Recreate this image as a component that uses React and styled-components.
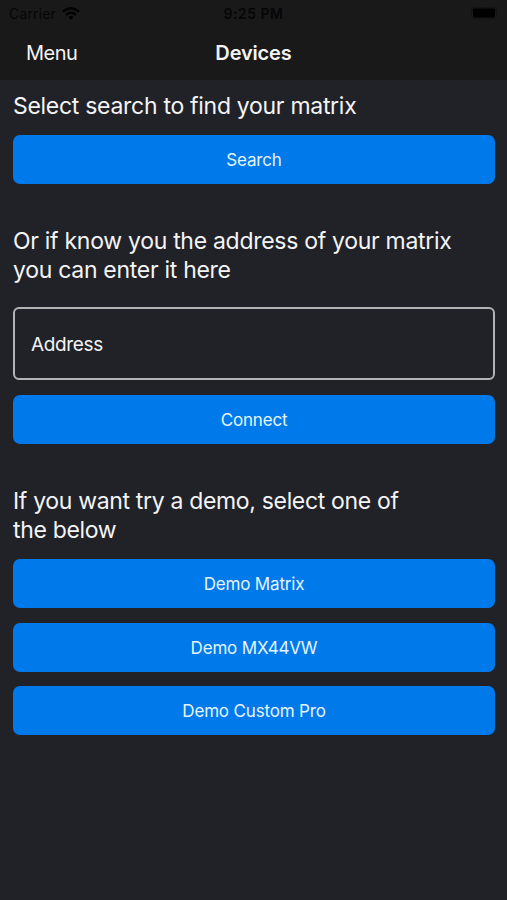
import React from "react";
import styled, { createGlobalStyle } from "styled-components";

const Global = createGlobalStyle`
  * { box-sizing: border-box; }
  body { margin: 0; background: #212228; }
`;

const Screen = styled.main`
  height: 900px;
  background: #212228;
  color: #f4f4f5;
  font-family: Inter, "Liberation Sans", sans-serif;
`;

const Header = styled.header`
  height: 80px;
  background: #191919;
`;

const StatusBar = styled.div`
  height: 27px;
  padding: 0 9px;
  display: grid;
  grid-template-columns: 1fr auto 1fr;
  align-items: center;
  color: #060606;
  font-size: 14px;
`;

const Carrier = styled.div`
  display: flex;
  align-items: center;
  gap: 6px;
  letter-spacing: 0.15px;
`;

const Time = styled.div`
  font-weight: 600;
  letter-spacing: 0.5px;
`;

const WifiIcon = styled.svg`
  margin-top: -1px;
`;

const Battery = styled.svg`
  justify-self: end;
  margin-top: -1px;
`;

const NavBar = styled.nav`
  height: 52px;
  padding: 0 26px;
  display: grid;
  grid-template-columns: 1fr auto 1fr;
  align-items: center;
  font-size: 20px;
  letter-spacing: -0.5px;
`;

const Title = styled.h1`
  margin: 0;
  font-size: 20px;
  font-weight: 600;
  letter-spacing: -0.15px;
`;

const Content = styled.div`
  padding: 12px 12px 0 13px;
`;

const Prompt = styled.p`
  margin: 0 0 ${(p) => p.$bottom}px;
  font-size: 23px;
  line-height: 29px;
  letter-spacing: ${(p) => p.$spacing || -0.29}px;
  white-space: pre-line;
`;

const Button = styled.button`
  display: block;
  width: 100%;
  height: 49px;
  margin: 0 0 ${(p) => p.$gap || 0}px;
  border: 0;
  border-radius: 7px;
  background: #007aea;
  color: #e6f3ff;
  font: 400 17px Inter, sans-serif;
  letter-spacing: -0.17px;
`;

const Address = styled.div`
  height: 73px;
  margin-bottom: 15px;
  padding: 2px 0 0 16px;
  display: flex;
  align-items: center;
  border: 2px solid #b2b3b5;
  border-radius: 6px;
  font-size: 19px;
  letter-spacing: -0.35px;
`;

export default function App() {
  return (
    <Screen>
      <Global />
      <Header>
        <StatusBar>
          <Carrier>
            Carrier
            <WifiIcon width="18" height="13" viewBox="0 0 18 13" fill="none" stroke="#000" strokeWidth="2.4">
              <path d="M1 4.6Q9-2 17 4.6M4 7.8Q9 3.8 14 7.8" />
              <path d="M6.5 10Q9 8 11.5 10L9 12.7Z" fill="#000" stroke="none" />
            </WifiIcon>
          </Carrier>
          <Time>9:25 PM</Time>
          <Battery width="27" height="12" viewBox="0 0 27 12">
            <rect x="2" y="1.5" width="22" height="9" rx="1.5" fill="#000" />
            <rect x=".5" y=".5" width="25" height="11" rx="3" fill="none" stroke="#131313" />
          </Battery>
        </StatusBar>
        <NavBar>
          <span>Menu</span>
          <Title>Devices</Title>
        </NavBar>
      </Header>
      <Content>
        <Prompt $bottom={14}>Select search to find your matrix</Prompt>
        <Button $gap={43}>Search</Button>
        <Prompt $bottom={22}>{"Or if know you the address of your matrix\nyou can enter it here"}</Prompt>
        <Address>Address</Address>
        <Button $gap={43}>Connect</Button>
        <Prompt $bottom={14} $spacing={-0.33}>{"If you want try a demo, select one of\nthe below"}</Prompt>
        <Button $gap={15}>Demo Matrix</Button>
        <Button $gap={14}>Demo MX44VW</Button>
        <Button>Demo Custom Pro</Button>
      </Content>
    </Screen>
  );
}
